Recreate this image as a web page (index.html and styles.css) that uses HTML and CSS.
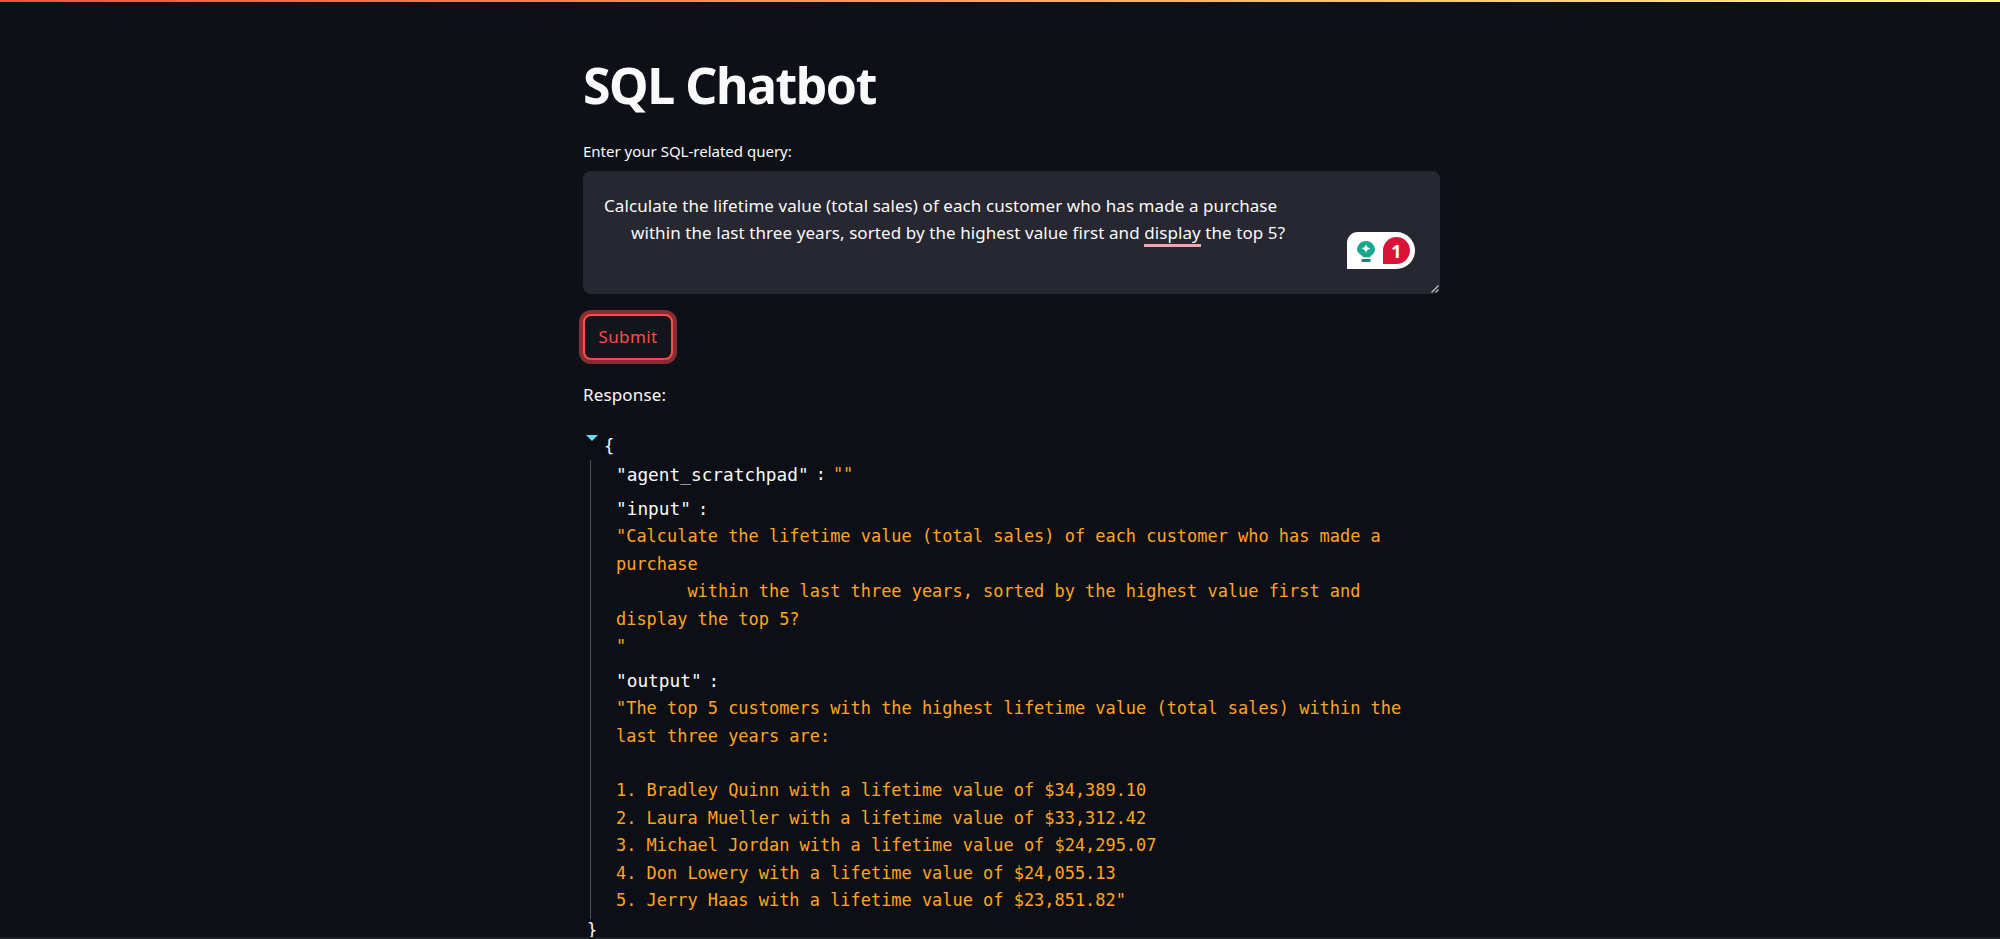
FILE: index.html
```html
<!DOCTYPE html>
<html lang="en">
<head>
<meta charset="utf-8">
<title>SQL Chatbot</title>
<link rel="stylesheet" href="styles.css">
</head>
<body>
<div class="topbar"></div>
<main class="main">
  <h1 class="title">SQL Chatbot</h1>
  <label class="label">Enter your SQL-related query:</label>
  <div class="textarea">
    <div class="textarea-text">Calculate the lifetime value (total sales) of each customer who has made a purchase
      within the last three years, sorted by the highest value first and <span class="flag">display</span> the top 5?</div>
    <div class="badge">
      <svg class="bulb" width="18" height="21" viewBox="0 0 18 21" aria-hidden="true">
        <path d="M9 0a9 9 0 0 1 9 8.200c0 3-1.700 4.600-3.400 6.100-.9.8-1.300 1.300-1.500 1.900H5.900c-.2-.6-.6-1.100-1.500-1.900C2.700 12.800 0 11.200 0 8.200A9 9 0 0 1 9 0z" fill="#15a88f"/>
        <path d="M9 3c.5 2.500 1.800 3.800 4.500 4.500C10.800 8.200 9.500 9.500 9 12c-.5-2.500-1.800-3.800-4.500-4.500C7.200 6.800 8.500 5.500 9 3z" fill="#fff"/>
        <rect x="4.500" y="18" width="9" height="3" rx=".5" fill="#0f8a76"/>
      </svg>
      <span class="count">1</span>
    </div>
    <svg class="grip" width="8" height="8" viewBox="0 0 8 8" aria-hidden="true">
      <path d="M0.500 7.500 7.500 .5M4.500 7.500 7.500 4.500" stroke="#c8c8cc" stroke-width="1.100"/>
    </svg>
  </div>
  <button class="submit" type="button">Submit</button>
  <p class="response">Response:</p>
  <section class="json">
    <div class="open"><span class="caret"></span><span class="brace">{</span></div>
    <div class="body">
      <div class="row row-inline"><span class="key">"agent_scratchpad"</span><span class="colon">:</span><span class="str">""</span></div>
      <div class="row"><div><span class="key">"input"</span><span class="colon">:</span></div><div class="str">"Calculate the lifetime value (total sales) of each customer who has made a purchase
       within the last three years, sorted by the highest value first and display the top 5?
"</div></div>
      <div class="row"><div><span class="key">"output"</span><span class="colon">:</span></div><div class="str">"The top 5 customers with the highest lifetime value (total sales) within the last three years are:

1. Bradley Quinn with a lifetime value of $34,389.10
2. Laura Mueller with a lifetime value of $33,312.42
3. Michael Jordan with a lifetime value of $24,295.07
4. Don Lowery with a lifetime value of $24,055.13
5. Jerry Haas with a lifetime value of $23,851.82"</div></div>
    </div>
    <div class="close">}</div>
  </section>
</main>
</body>
</html>
```
FILE: styles.css
```css
* { box-sizing: border-box; }
html, body { margin: 0; height: 939px; overflow: hidden; }
body {
  background: #0d1117;
  color: #fafafa;
  font-family: "Noto Sans", "Open Sans", sans-serif;
  display: flex;
  flex-direction: column;
  border-bottom: 2px solid #1b1e25;
}
.topbar {
  flex: none;
  height: 2px;
  background: linear-gradient(90deg, #ff4b4b, #fffd80);
}
.main {
  width: 857px;
  margin-left: 583px;
}
.title {
  margin: 53px 0 0;
  font-size: 50px;
  line-height: 60px;
  font-weight: 700;
  letter-spacing: -1.45px;
  color: #fafafa;
}
.label {
  display: block;
  margin-top: 25px;
  font-size: 15px;
  line-height: 22px;
}
.textarea {
  position: relative;
  height: 123px;
  margin-top: 9px;
  padding: 21px 21px;
  background: #262730;
  border-radius: 8px;
}
.textarea-text {
  white-space: pre-wrap;
  font-size: 17px;
  line-height: 27px;
  letter-spacing: 0.08px;
}
.flag { border-bottom: 3px solid #f5a3b3; }
.badge {
  position: absolute;
  left: 764px;
  top: 61px;
  width: 68px;
  height: 37px;
  display: flex;
  align-items: center;
  justify-content: space-between;
  padding: 0 5px 0 10px;
  background: #fff;
  border-radius: 11px 19px 19px 0;
}
.bulb { flex: none; margin-top: 2px; }
.count {
  width: 27px;
  height: 27px;
  display: flex;
  align-items: center;
  justify-content: center;
  background: #d91438;
  color: #fff;
  font-size: 18px;
  font-weight: 700;
  border-radius: 14px 14px 14px 0;
}
.grip { position: absolute; right: 1px; bottom: 1px; }
.submit {
  display: block;
  width: 90px;
  height: 46px;
  margin: 20px 0 0;
  padding: 0 0 2px;
  background: #12151c;
  color: #ff4b4b;
  border: 2px solid #ff4b4b;
  border-radius: 8px;
  box-shadow: 0 0 0 4px rgba(255, 75, 75, 0.5);
  font: inherit;
  font-size: 17px;
  letter-spacing: 0.4px;
}
.response {
  margin: 21px 0 0;
  font-size: 17px;
  line-height: 27px;
  letter-spacing: 0.15px;
}
.json {
  margin-top: 25px;
  height: 520px;
  background: #0c1016;
  font-family: "DejaVu Sans Mono", "Liberation Mono", monospace;
  font-size: 16.95px;
  line-height: 27.4px;
}
.open { position: relative; height: 27px; padding-left: 21px; }
.caret {
  position: absolute;
  left: 3px;
  top: 2px;
  width: 0;
  height: 0;
  border-left: 6px solid transparent;
  border-right: 6px solid transparent;
  border-top: 6px solid #62dcf0;
}
.brace { color: #fafafa; }
.body {
  margin: 0 0 0 7px;
  padding: 1px 17px 4px 25px;
  border-left: 1px solid #4d4f55;
}
.row { margin-bottom: 6.5px; }
.row:last-child { margin-bottom: 0; }
.row-inline { display: flex; }
.key { font-size: 17.8px; }
.colon { margin: 0 7px; }
.str { color: #ffa421; white-space: pre-wrap; }
.close { padding-left: 4px; line-height: 23px; }
```
